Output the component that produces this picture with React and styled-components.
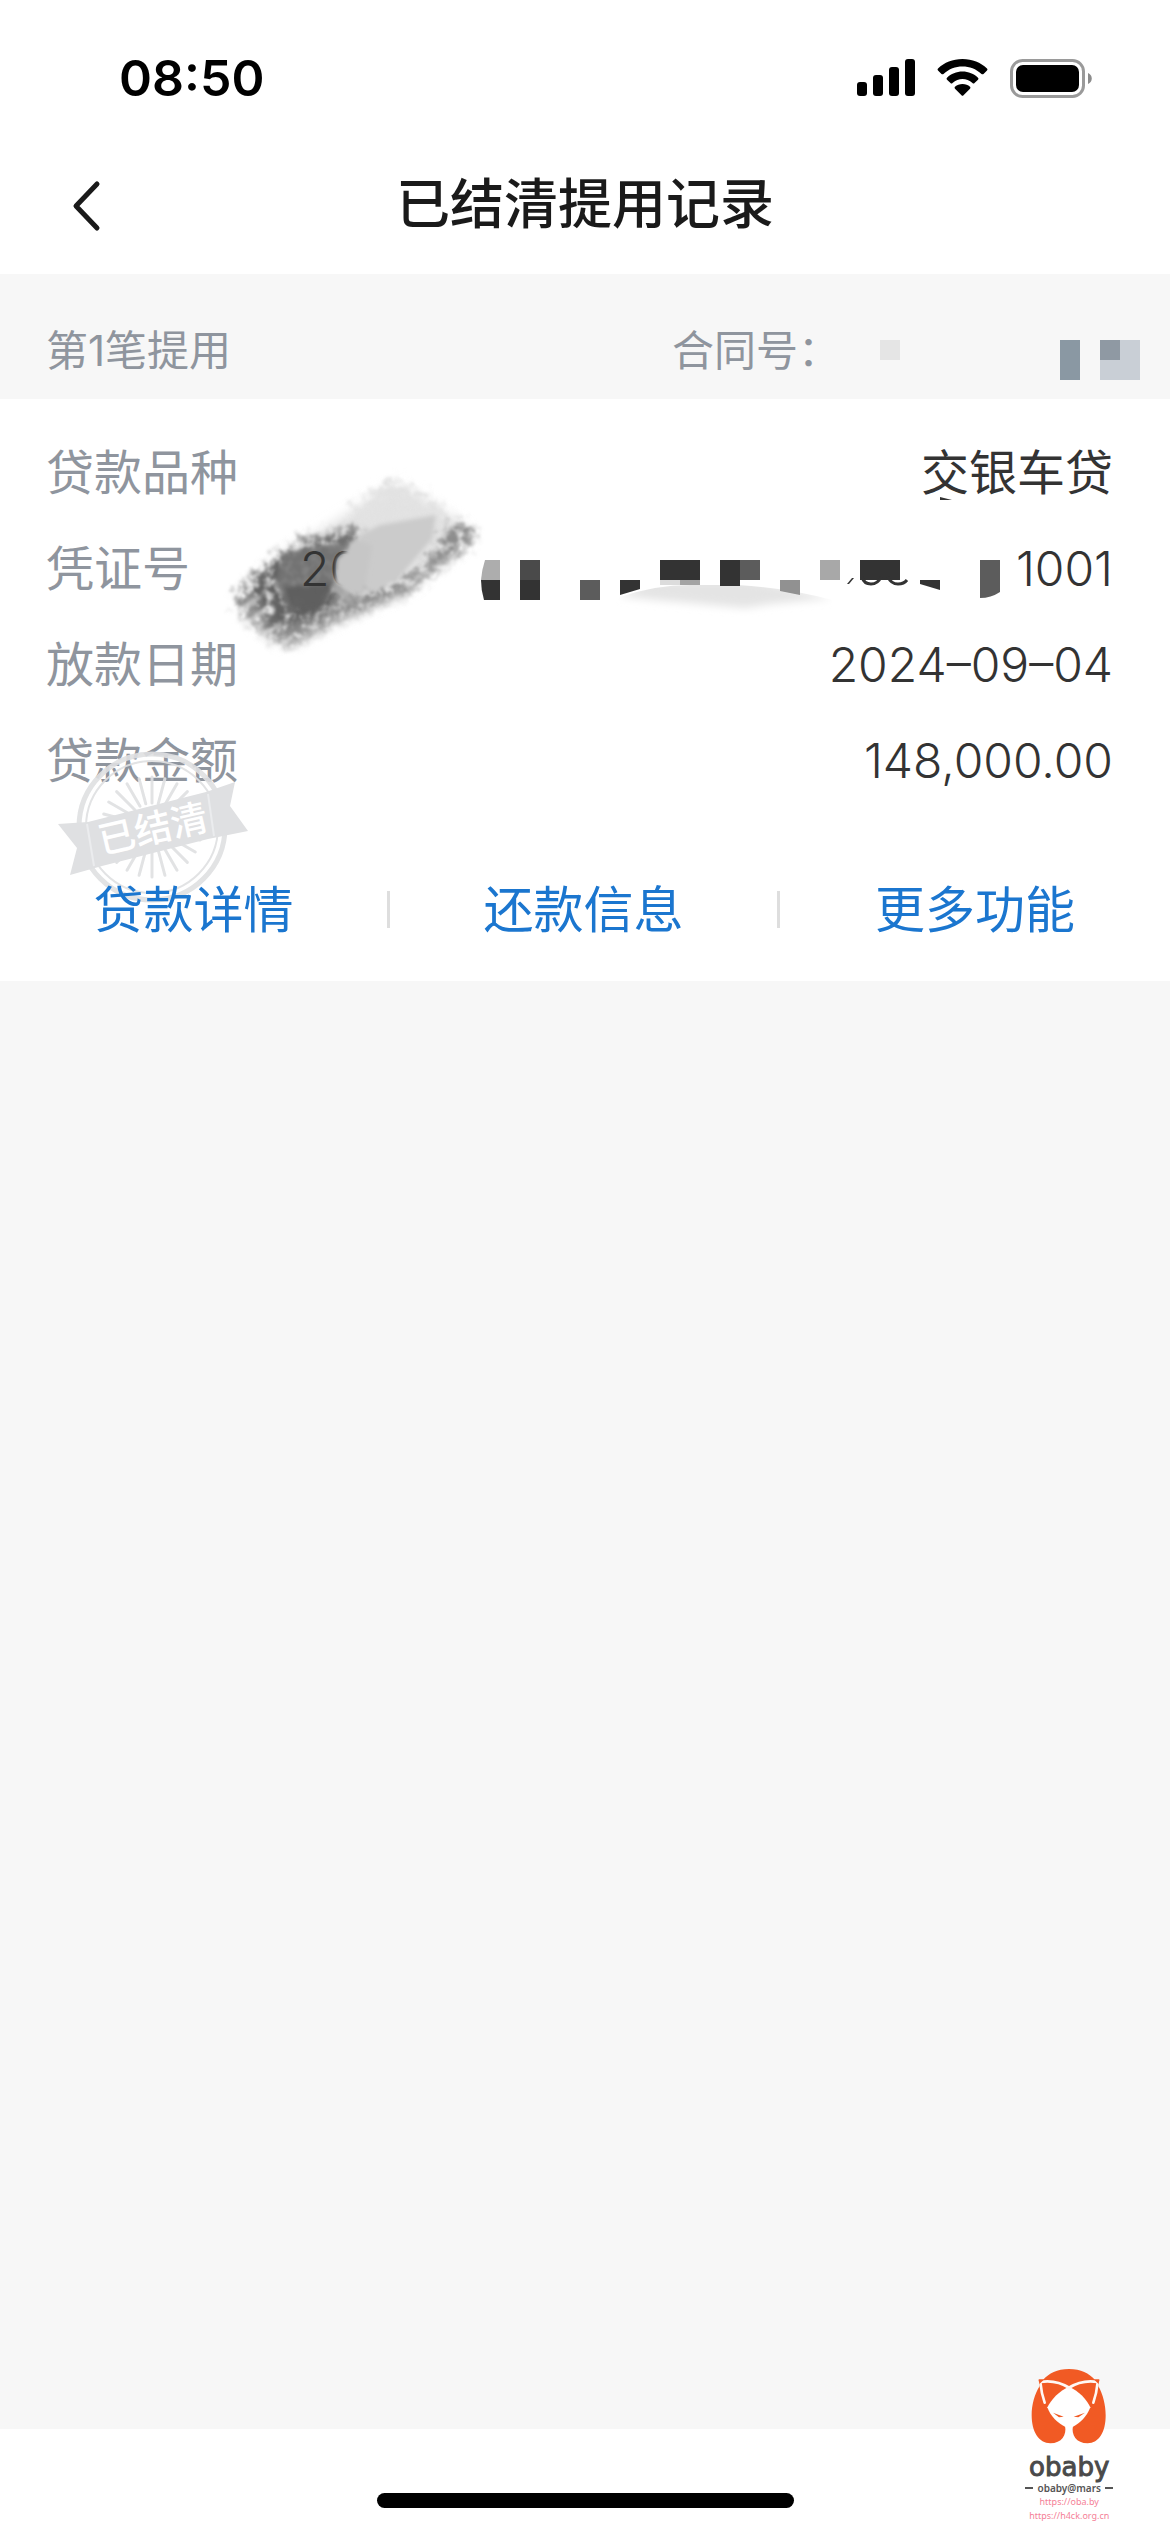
import React from "react";
import styled, { createGlobalStyle } from "styled-components";

const GlobalStyle = createGlobalStyle`
  *, *::before, *::after { box-sizing: border-box; }
  body {
    margin: 0;
    background: #f7f7f7;
    font-family: Inter, "Noto Sans CJK SC", sans-serif;
    color: #333333;
  }
`;

const Page = styled.div`
  position: relative;
  display: flex;
  flex-direction: column;
  min-height: 100vh;
`;

const StatusBar = styled.div`
  display: flex;
  align-items: center;
  justify-content: space-between;
  height: 132px;
  padding: 24px 78px 0 119px;
  background: #ffffff;
`;

const Clock = styled.time`
  font-size: 50px;
  font-weight: 600;
  line-height: 60px;
  color: #000000;
`;

const StatusIcons = styled.div`
  display: flex;
  align-items: center;
  gap: 22px;
`;

const NavBar = styled.header`
  display: grid;
  grid-template-columns: 120px 1fr 120px;
  align-items: center;
  height: 142px;
  padding-top: 4px;
  background: #ffffff;
`;

const BackButton = styled.button`
  display: flex;
  align-items: center;
  height: 96px;
  padding: 0 0 0 72px;
  border: 0;
  background: none;
  color: #1a1a1a;
`;

const Title = styled.h1`
  margin: 0;
  font-size: 54px;
  font-weight: 500;
  line-height: 80px;
  text-align: center;
  color: #1a1a1a;
`;

const Main = styled.main`
  flex: 1;
`;

const SectionHead = styled.div`
  display: flex;
  align-items: center;
  justify-content: space-between;
  height: 125px;
  padding: 28px 30px 0 46px;
  font-size: 42px;
  line-height: 60px;
  color: #8f959e;
`;

const Contract = styled.div`
  display: flex;
  align-items: center;
  gap: 40px;
`;

const Card = styled.section`
  padding-top: 26px;
  background: #ffffff;
`;

const Records = styled.dl`
  margin: 0;
`;

const Row = styled.div`
  display: flex;
  align-items: center;
  justify-content: space-between;
  height: 96px;
  padding: 0 57px 0 46px;
  font-size: 48px;
  line-height: 72px;
`;

const Label = styled.dt`
  color: #8f959e;
`;

const Value = styled.dd`
  display: flex;
  align-items: center;
  margin: 0;
  font-weight: ${(p) => (p.$numeric ? 300 : 400)};
`;

const Lead = styled.span`
  position: relative;
  width: 170px;
`;

const LeadDigits = styled.span`
  position: relative;
`;

const Tail = styled.span`
  width: 103px;
  text-align: right;
`;

const SmudgeArt = styled.svg`
  position: absolute;
  left: -80px;
  top: -72px;
`;

const MosaicArt = styled.svg`
  display: block;
  overflow: visible;
`;

const Actions = styled.nav`
  position: relative;
  display: grid;
  grid-template-columns: repeat(3, 1fr);
  align-items: center;
  height: 143px;
  margin-top: 29px;
`;

const ActionLink = styled.a`
  position: relative;
  display: flex;
  align-items: center;
  justify-content: center;
  height: 37px;
  border-right: ${(p) => (p.$last ? "0" : "3px solid #dedede")};
  font-size: 50px;
  line-height: 72px;
  color: #1b76cf;
  text-decoration: none;
`;

const StampArt = styled.svg`
  position: absolute;
  left: 50px;
  top: -98px;
`;

const Footer = styled.footer`
  display: flex;
  align-items: flex-end;
  justify-content: center;
  height: 103px;
  padding-bottom: 24px;
  background: #ffffff;
`;

const HomeIndicator = styled.div`
  width: 417px;
  height: 15px;
  border-radius: 8px;
  background: #000000;
`;

const Watermark = styled.aside`
  position: absolute;
  right: 57px;
  bottom: 9px;
  display: flex;
  flex-direction: column;
  align-items: center;
  font-family: "Noto Sans", sans-serif;
`;

const Wordmark = styled.span`
  margin-top: 9px;
  font-family: "DejaVu Sans", sans-serif;
  font-size: 26px;
  line-height: 28px;
  color: #4a4a4a;
  -webkit-text-stroke: 1px #4a4a4a;
`;

const Handle = styled.span`
  display: flex;
  align-items: center;
  gap: 4px;
  font-size: 10px;
  font-weight: 600;
  line-height: 14px;
  color: #555555;

  &::before,
  &::after {
    content: "";
    width: 8px;
    height: 2px;
    background: #555555;
  }
`;

const SiteLink = styled.a`
  font-size: 9px;
  line-height: 14px;
  color: #f57f97;
  text-decoration: none;
`;

function SignalIcon() {
  return (
    <svg width="58" height="38" viewBox="0 0 58 38" aria-hidden="true">
      <rect x="0" y="23" width="10" height="14" rx="3" />
      <rect x="16" y="16" width="10" height="21" rx="3" />
      <rect x="32" y="8" width="10" height="29" rx="3" />
      <rect x="48" y="0" width="10" height="37" rx="3" />
    </svg>
  );
}

function WifiIcon() {
  return (
    <svg width="51" height="38" viewBox="0 0 51 38" aria-hidden="true">
      <path d="M25.500 0.000 C35.500 0.000 43.500 3.500 50 9.500 Q51 10.500 50 11.500 L46.500 15 Q45.500 15.700 44.500 15 C39 10 32.500 7.600 25.500 7.600 C18.500 7.600 12 10 6.500 15 Q5.500 15.700 4.500 15 L1 11.500 Q0 10.500 1 9.500 C7.500 3.500 15.500 0 25.500 0 Z" />
      <path d="M25.500 12.500 C31.500 12.500 37 14.800 41 18.700 Q42 19.700 41 20.700 L37.500 24 Q36.500 25 35.500 24 C32.500 21.300 29 20 25.500 20 C22 20 18.500 21.300 15.500 24 Q14.500 25 13.500 24 L10 20.700 Q9 19.700 10 18.700 C14 14.800 19.500 12.500 25.500 12.500 Z" />
      <path d="M25.500 25 C28.500 25 31 26 33 27.800 Q34 28.800 33 29.800 L26.500 36.300 Q25.500 37.300 24.500 36.300 L18 29.800 Q17 28.800 18 27.800 C20 26 22.500 25 25.500 25 Z" />
    </svg>
  );
}

function BatteryIcon() {
  return (
    <svg width="82" height="39" viewBox="0 0 82 39" aria-hidden="true">
      <rect x="1.500" y="1.500" width="72" height="36" rx="11" fill="none" stroke="#9a9a9a" strokeWidth="3" />
      <rect x="6" y="6" width="63" height="27" rx="7" />
      <path d="M78 14 C83 16 83 23 78 25 Z" fill="#8c8c8c" />
    </svg>
  );
}

function BackIcon() {
  return (
    <svg width="30" height="54" viewBox="0 0 30 54" fill="none" stroke="currentColor" strokeWidth="5" strokeLinecap="round" strokeLinejoin="round" aria-hidden="true">
      <path d="M25 6 L4 28 L25 50" />
    </svg>
  );
}

function ContractMosaic() {
  return (
    <MosaicArt width="260" height="60" viewBox="0 0 260 60" shapeRendering="crispEdges" aria-hidden="true">
      <rect x="0" y="19" width="20" height="20" fill="#e5e5e5" />
      <rect x="180" y="19" width="20" height="40" fill="#8a98a3" />
      <rect x="220" y="19" width="40" height="40" fill="#c9cfd6" />
      <rect x="220" y="19" width="20" height="20" fill="#8f99a3" />
    </MosaicArt>
  );
}

function VoucherMosaic() {
  return (
    <MosaicArt width="540" height="96" viewBox="470 521 540 96" aria-hidden="true">
      <defs>
        <filter id="haze" x="-10%" y="-30%" width="120%" height="160%">
          <feGaussianBlur stdDeviation="4" />
        </filter>
        <clipPath id="hazeClip">
          <path d="M600 620 L620 597 Q655 585 690 585 H738 Q790 588 832 600 V625 H600 Z" />
        </clipPath>
      </defs>
      <g clipPath="url(#hazeClip)">
        <path d="M620 596 L655 578 H745 L832 598 L770 604 L745 608 L690 603 L655 600 Z" fill="#e4e4e4" filter="url(#haze)" />
      </g>
      <g fill="#333333">
        <path d="M481 580 H500 V600 H484 Q481 590 481 580 Z" />
        <path d="M485 560 H500 V580 H481 Q482 569 485 560 Z" fill="#adadad" />
        <rect x="520" y="560" width="20" height="20" fill="#4a4a4a" />
        <rect x="520" y="580" width="20" height="20" />
        <rect x="580" y="580" width="20" height="20" fill="#5c5c5c" />
        <path d="M620 580 H640 V589 L620 595 Z" />
        <rect x="660" y="560" width="40" height="20" />
        <rect x="660" y="580" width="20" height="5" fill="#dcdcdc" />
        <rect x="680" y="580" width="20" height="5" fill="#a3a3a3" />
        <rect x="720" y="560" width="20" height="26" />
        <rect x="740" y="560" width="20" height="20" fill="#5c5c5c" />
        <path d="M780 580 H800 V595 L780 591 Z" fill="#919191" />
        <rect x="820" y="560" width="20" height="20" fill="#a8a8a8" />
        <rect x="860" y="560" width="40" height="20" />
        <path d="M852 578 H854 L849 584 H847 Z" />
        <path d="M862 577 Q864 584 871 584 Q878 584 881 577 M888 577 Q891 584 898 584 Q904 584 907 580" fill="none" stroke="#333333" strokeWidth="3" />
        <path d="M920 580 H940 V590 L920 584 Z" />
        <path d="M980 560 H1000 V592 Q991 598 980 598 Z" fill="#5c5c5c" />
        <path d="M940 497 L952 500 H940 Z" />
      </g>
    </MosaicArt>
  );
}

function SmudgeBase() {
  return (
    <SmudgeArt width="270" height="210" viewBox="0 0 270 210" aria-hidden="true">
      <defs>
        <filter id="charcoal" x="-10%" y="-10%" width="120%" height="120%" colorInterpolationFilters="sRGB">
          <feGaussianBlur in="SourceGraphic" stdDeviation="4" result="soft" />
          <feTurbulence type="fractalNoise" baseFrequency="0.11" numOctaves="3" seed="8" result="grain" />
          <feDisplacementMap in="soft" in2="grain" scale="22" xChannelSelector="R" yChannelSelector="G" result="rough" />
          <feColorMatrix in="grain" type="matrix" values="0 0 0 0 0  0 0 0 0 0  0 0 0 0 0  0 2.400 0 0 -0.400" result="holes" />
          <feComposite in="rough" in2="holes" operator="in" result="cut" />
          <feGaussianBlur in="cut" stdDeviation="0.800" />
        </filter>
        <filter id="edge" x="-10%" y="-10%" width="120%" height="120%">
          <feGaussianBlur stdDeviation="2" />
        </filter>
        <filter id="veil" x="-20%" y="-20%" width="140%" height="140%">
          <feGaussianBlur stdDeviation="6" />
        </filter>
      </defs>
      <path d="M26 134 L56 98 L106 66 L174 24 L206 40 L246 66 L240 88 L190 128 L120 160 L66 184 L44 170 Z" fill="#e2e2e2" filter="url(#veil)" />
      <g filter="url(#charcoal)">
        <path d="M128 50 L174 16 L206 36 L240 58 L200 64 L150 72 Z" fill="#e2e2e2" />
        <path d="M16 134 L46 102 L88 76 L140 66 L136 100 L150 130 L200 112 L214 90 L232 62 L252 66 L254 82 L222 106 L186 134 L120 160 L68 188 L44 174 L20 154 Z" fill="#8c8c8c" />
        <path d="M30 128 L60 98 L134 76 L118 104 L120 136 L92 160 L50 172 Z" fill="#626262" />
      </g>
      <g filter="url(#edge)">
        <path d="M62 92 L134 78 L120 102 L114 126 L98 148 L70 150 L56 124 Z" fill="#757575" opacity="0.85" />
        <path d="M64 126 L112 122 L108 142 L88 154 L70 146 Z" fill="#5a5a5a" opacity="0.8" />
        <path d="M140 74 L160 64 L216 54 L212 78 L178 118 L150 132 L130 112 Z" fill="#cbcbcb" />
      </g>
      <g stroke="#ffffff" strokeWidth="3" strokeLinecap="round" opacity="0.75" filter="url(#edge)">
        <path d="M8 156 L40 136 M20 166 L46 148 M34 182 L58 164 M48 194 L72 176" />
      </g>
    </SmudgeArt>
  );
}

function SmudgeCover() {
  return (
    <SmudgeArt width="270" height="210" viewBox="0 0 270 210" aria-hidden="true">
      <path d="M134 78 L126 90 L117 98 L115 122 L124 132 L144 134 L152 84 Z" fill="#c6c6c6" filter="url(#edge)" />
      <path d="M110 126 L118 124 L134 138 L130 144 Z" fill="#a8a8a8" filter="url(#edge)" />
    </SmudgeArt>
  );
}

function SettledStamp() {
  const rays = [];
  for (let a = 0; a < 360; a += 15) {
    const r = ((a - 15) * Math.PI) / 180;
    rays.push(
      <line
        key={a}
        x1={102 + Math.cos(r) * 24}
        y1={87 + Math.sin(r) * 24}
        x2={102 + Math.cos(r) * 50}
        y2={87 + Math.sin(r) * 50}
      />
    );
  }
  return (
    <StampArt width="210" height="180" viewBox="0 0 210 180" role="img" aria-label="已结清">
      <g fill="none" stroke="#dfe0e2" opacity="0.9">
        <circle cx="102" cy="87" r="73" strokeWidth="5" />
        <circle cx="102" cy="87" r="66" strokeWidth="2" />
        <g strokeWidth="3" strokeLinecap="round">{rays}</g>
      </g>
      <path d="M8 84 L38 82 L156 52 L185 42 L180 66 L198 91 L158 99 L52 126 L20 135 L27 108 Z" fill="#dfe0e2" />
      <path d="M37 84 L44 126 M158 54 L164 96" stroke="#ebecee" strokeWidth="2" />
      <text
        x="103"
        y="102"
        transform="rotate(-13 103 89)"
        textAnchor="middle"
        fontFamily="Noto Sans CJK SC, sans-serif"
        fontSize="37"
        fontWeight="500"
        fill="#ffffff"
      >
        已结清
      </text>
    </StampArt>
  );
}

function FoxLogo() {
  return (
    <svg width="76" height="76" viewBox="28 24 228 228" aria-hidden="true">
      <path d="M130 196 H154 L160 250 H124 Z" fill="#ffffff" />
      <path
        d="M142 27 C178 27 202 40 220 60 H233 L230 78 C244 104 252 134 252 166 C252 216 232 250 198 250 C164 250 148 224 154 198 H130 C136 224 120 250 86 250 C52 250 30 216 30 166 C30 134 38 104 54 78 L51 60 H64 C82 40 106 27 142 27 Z"
        fill="#f15a24"
      />
      <path d="M142 80 C170 92 196 118 206 142 C196 170 174 190 154 200 H130 C110 190 86 170 77 142 C88 118 114 92 142 80 Z" fill="#ffffff" />
      <g fill="none" stroke="#fff8f4" strokeWidth="8" strokeLinecap="round" strokeLinejoin="round">
        <path d="M69 128 C62 108 58 88 56 66 C90 60 118 68 144 84" />
        <path d="M215 128 C222 108 226 88 228 66 C194 60 166 68 140 84" />
      </g>
      <path d="M51 58 H68 L53 72 Z M233 58 H216 L231 72 Z" fill="#f15a24" />
      <path d="M94 158 L126 170 L112 172 Z M190 158 L156 170 L170 172 Z" fill="#f15a24" />
    </svg>
  );
}

const ACTIONS = ["贷款详情", "还款信息", "更多功能"];

export default function App() {
  return (
    <>
      <GlobalStyle />
      <Page>
        <StatusBar>
          <Clock>08:50</Clock>
          <StatusIcons>
            <SignalIcon />
            <WifiIcon />
            <BatteryIcon />
          </StatusIcons>
        </StatusBar>
        <NavBar>
          <BackButton type="button" aria-label="返回">
            <BackIcon />
          </BackButton>
          <Title>已结清提用记录</Title>
        </NavBar>
        <Main>
          <SectionHead>
            <span>第1笔提用</span>
            <Contract>
              <span>合同号：</span>
              <ContractMosaic />
            </Contract>
          </SectionHead>
          <Card>
            <Records>
              <Row>
                <Label>贷款品种</Label>
                <Value>交银车贷</Value>
              </Row>
              <Row>
                <Label>凭证号</Label>
                <Value $numeric>
                  <Lead>
                    <SmudgeBase />
                    <LeadDigits>20</LeadDigits>
                    <SmudgeCover />
                  </Lead>
                  <VoucherMosaic />
                  <Tail>1001</Tail>
                </Value>
              </Row>
              <Row>
                <Label>放款日期</Label>
                <Value $numeric>2024–09–04</Value>
              </Row>
              <Row>
                <Label>贷款金额</Label>
                <Value $numeric>148,000.00</Value>
              </Row>
            </Records>
            <Actions>
              <SettledStamp />
              {ACTIONS.map((name, i) => (
                <ActionLink key={name} href="#" $last={i === ACTIONS.length - 1}>
                  {name}
                </ActionLink>
              ))}
            </Actions>
          </Card>
        </Main>
        <Footer>
          <HomeIndicator />
        </Footer>
        <Watermark>
          <FoxLogo />
          <Wordmark>obaby</Wordmark>
          <Handle>obaby@mars</Handle>
          <SiteLink href="https://oba.by">https://oba.by</SiteLink>
          <SiteLink href="https://h4ck.org.cn">https://h4ck.org.cn</SiteLink>
        </Watermark>
      </Page>
    </>
  );
}
